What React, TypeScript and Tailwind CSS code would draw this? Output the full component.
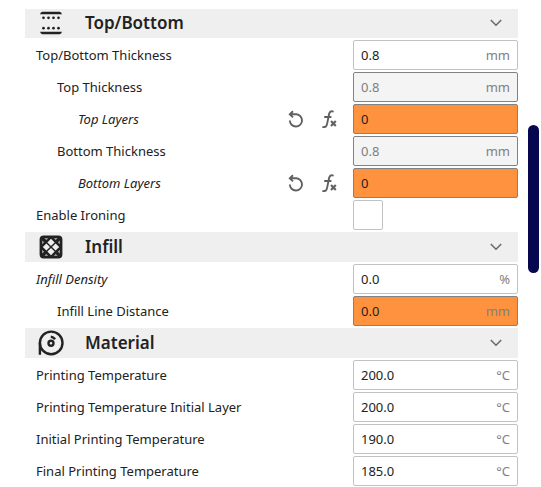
import { clsx } from 'clsx';
import { type ReactNode, useState } from 'react';

type Setting = {
  id: string;
  label: string;
  value?: string;
  unit?: string;
  depth?: 0 | 1 | 2;
  state?: 'disabled' | 'warning';
  changed?: boolean;
  resettable?: boolean;
};

type Category = {
  title: string;
  icon: ReactNode;
  settings: Setting[];
};

const TopBottomIcon = () => (
  <svg viewBox="0 0 26 26" className="size-[26px]" fill="#222" aria-hidden="true">
    <path d="M2 4.3Q2.6 2 4.4 1.8h17.2q1.8.2 2.4 2.5zM2 21.7q.6 2.3 2.4 2.5h17.2q1.8-.2 2.4-2.5z" />
    {[5.5, 10.5, 15.5, 20.5].map((x) => (
      <g key={x}>
        <circle cx={x} cy={7.8} r={1.35} />
        <circle cx={x} cy={18.2} r={1.35} />
      </g>
    ))}
  </svg>
);

const InfillIcon = () => (
  <svg viewBox="0 0 26 26" className="size-[26px]" fill="#efefef" aria-hidden="true">
    <rect x={1.6} y={1.6} width={22.8} height={22.8} rx={4} fill="#222" />
    {/* openings between the crossing lines */}
    <path d="M13 4.8l3.6 3.6L13 12 9.4 8.4zM13 14l3.6 3.6-3.6 3.6-3.6-3.6zM8.4 9.4L12 13l-3.6 3.6L4.8 13zM17.6 9.4l3.6 3.6-3.6 3.6L14 13z" />
    {/* slivers left along the frame */}
    <path d="M6.4 4.2h3.8L8.3 6.1zM15.8 4.2h3.8l-1.9 1.9zM6.4 21.8h3.8l-1.9-1.9zM15.8 21.8h3.8l-1.9-1.9zM4.2 6.4v3.8l1.9-1.9zM4.2 15.8v3.8l1.9-1.9zM21.8 6.4v3.8l-1.9-1.9zM21.8 15.8v3.8l-1.9-1.9z" opacity={0.7} />
  </svg>
);

const MaterialIcon = () => (
  <svg
    viewBox="0 0 26 26"
    className="size-[26px]"
    fill="none"
    stroke="#222"
    strokeWidth={2.4}
    aria-hidden="true"
  >
    <circle cx={13.2} cy={12.9} r={11.3} />
    <circle cx={13} cy={13.2} r={2.5} />
    <path d="M1.9 12.5v12.3M12.8 6.8a6.4 6.4 0 0 1 4.3 2.4" />
  </svg>
);

const ChevronIcon = () => (
  <svg
    viewBox="0 0 12 8"
    className="h-2 w-3"
    fill="none"
    stroke="#666"
    strokeWidth={1.5}
    aria-hidden="true"
  >
    <path d="M0.8 1l5.2 5.2L11.2 1" />
  </svg>
);

const ResetIcon = () => (
  <svg
    viewBox="0 0 18 18"
    className="size-[18px]"
    fill="none"
    stroke="#606060"
    strokeWidth={1.9}
    aria-hidden="true"
  >
    <path d="M6 1.2L2.8 4.3 6 7.4M3 4.3h6.4a6.1 6.1 0 1 1-6.6 6.2" />
  </svg>
);

const FormulaIcon = () => (
  <svg
    viewBox="0 0 18 18"
    className="size-[18px]"
    fill="none"
    stroke="#606060"
    strokeWidth={1.9}
    aria-hidden="true"
  >
    <path d="M13.6 1.6c-2.8-1-4 .2-4.5 2.4L7 14.4c-.5 2.3-1.8 3.2-4.6 2.6M4.2 7h7.2" />
    <path d="M11 11l4.8 5M15.8 11L11 16" strokeWidth={2.1} />
  </svg>
);

const CATEGORIES: Category[] = [
  {
    title: 'Top/Bottom',
    icon: <TopBottomIcon />,
    settings: [
      { id: 'top-bottom-thickness', label: 'Top/Bottom Thickness', value: '0.8', unit: 'mm' },
      { id: 'top-thickness', label: 'Top Thickness', value: '0.8', unit: 'mm', depth: 1, state: 'disabled' },
      { id: 'top-layers', label: 'Top Layers', value: '0', depth: 2, state: 'warning', changed: true, resettable: true },
      { id: 'bottom-thickness', label: 'Bottom Thickness', value: '0.8', unit: 'mm', depth: 1, state: 'disabled' },
      { id: 'bottom-layers', label: 'Bottom Layers', value: '0', depth: 2, state: 'warning', changed: true, resettable: true },
      { id: 'enable-ironing', label: 'Enable Ironing' },
    ],
  },
  {
    title: 'Infill',
    icon: <InfillIcon />,
    settings: [
      { id: 'infill-density', label: 'Infill Density', value: '0.0', unit: '%', changed: true },
      { id: 'infill-line-distance', label: 'Infill Line Distance', value: '0.0', unit: 'mm', depth: 1, state: 'warning' },
    ],
  },
  {
    title: 'Material',
    icon: <MaterialIcon />,
    settings: [
      { id: 'printing-temp', label: 'Printing Temperature', value: '200.0', unit: '°C' },
      { id: 'printing-temp-initial-layer', label: 'Printing Temperature Initial Layer', value: '200.0', unit: '°C' },
      { id: 'initial-printing-temp', label: 'Initial Printing Temperature', value: '190.0', unit: '°C' },
      { id: 'final-printing-temp', label: 'Final Printing Temperature', value: '185.0', unit: '°C' },
    ],
  },
];

const SettingField = ({ id, value, unit, state }: Setting) => {
  if (value === undefined) {
    return (
      <input
        id={id}
        type="checkbox"
        className="block size-[30px] appearance-none rounded-xs border border-[#c0c2c4] bg-white checked:bg-[#070750]"
      />
    );
  }

  return (
    <div
      className={clsx(
        'flex h-[30px] items-center rounded-xs border px-[7px]',
        !state && 'border-[#c0c2c4] bg-white',
        state === 'disabled' && 'border-[#808285] bg-[#f4f4f4]',
        state === 'warning' && 'border-[#808285] bg-[#ff923e]',
      )}
    >
      <input
        id={id}
        type="text"
        defaultValue={value}
        disabled={state === 'disabled'}
        className="w-full min-w-0 flex-1 bg-transparent text-[#222] outline-none disabled:text-[#808080]"
      />
      {unit && <span className="text-[#808080]">{unit}</span>}
    </div>
  );
};

const SettingRow = (setting: Setting) => {
  const { id, label, depth = 0, changed, resettable } = setting;

  return (
    <div className="flex h-[30px] items-center">
      <label
        htmlFor={id}
        className={clsx(
          'flex-1 whitespace-nowrap text-[#222]',
          depth === 0 && 'pl-[11px]',
          depth === 1 && 'pl-8',
          depth === 2 && 'pl-[53px]',
          changed && 'italic',
        )}
      >
        {label}
      </label>
      {resettable && (
        <div className="flex gap-[15px] pr-[15px]">
          <button type="button" aria-label={`Reset ${label}`}>
            <ResetIcon />
          </button>
          <button type="button" aria-label={`Restore calculated ${label}`}>
            <FormulaIcon />
          </button>
        </div>
      )}
      <div className="w-[165px]">
        <SettingField {...setting} />
      </div>
    </div>
  );
};

const CategorySection = ({ title, icon, settings }: Category) => {
  const [open, setOpen] = useState(true);

  return (
    <section className="flex flex-col gap-0.5">
      <h2>
        <button
          type="button"
          aria-expanded={open}
          onClick={() => setOpen((prev) => !prev)}
          className="flex h-[30px] w-full items-center bg-[#efefef] pr-4 pl-[13px] text-left text-[17px] font-semibold text-[#222]"
        >
          {icon}
          <span className="flex-1 pl-[21px] leading-7">{title}</span>
          <ChevronIcon />
        </button>
      </h2>
      {open && settings.map((setting) => <SettingRow key={setting.id} {...setting} />)}
    </section>
  );
};

export default function App() {
  return (
    <main className="flex gap-2.5 bg-white pr-0.5 pl-[25px] font-['Noto_Sans',sans-serif] text-[13px] leading-5">
      {/* the list is scrolled so that the first header is cut by a pixel */}
      <div className="mt-[9px] flex-1 overflow-hidden">
        <div className="-mt-px flex flex-col gap-0.5">
          {CATEGORIES.map((category) => (
            <CategorySection key={category.title} {...category} />
          ))}
        </div>
      </div>
      <div className="w-[11px] pt-[125px]">
        <div className="h-[148px] rounded-full bg-[#070750]" />
      </div>
    </main>
  );
}
